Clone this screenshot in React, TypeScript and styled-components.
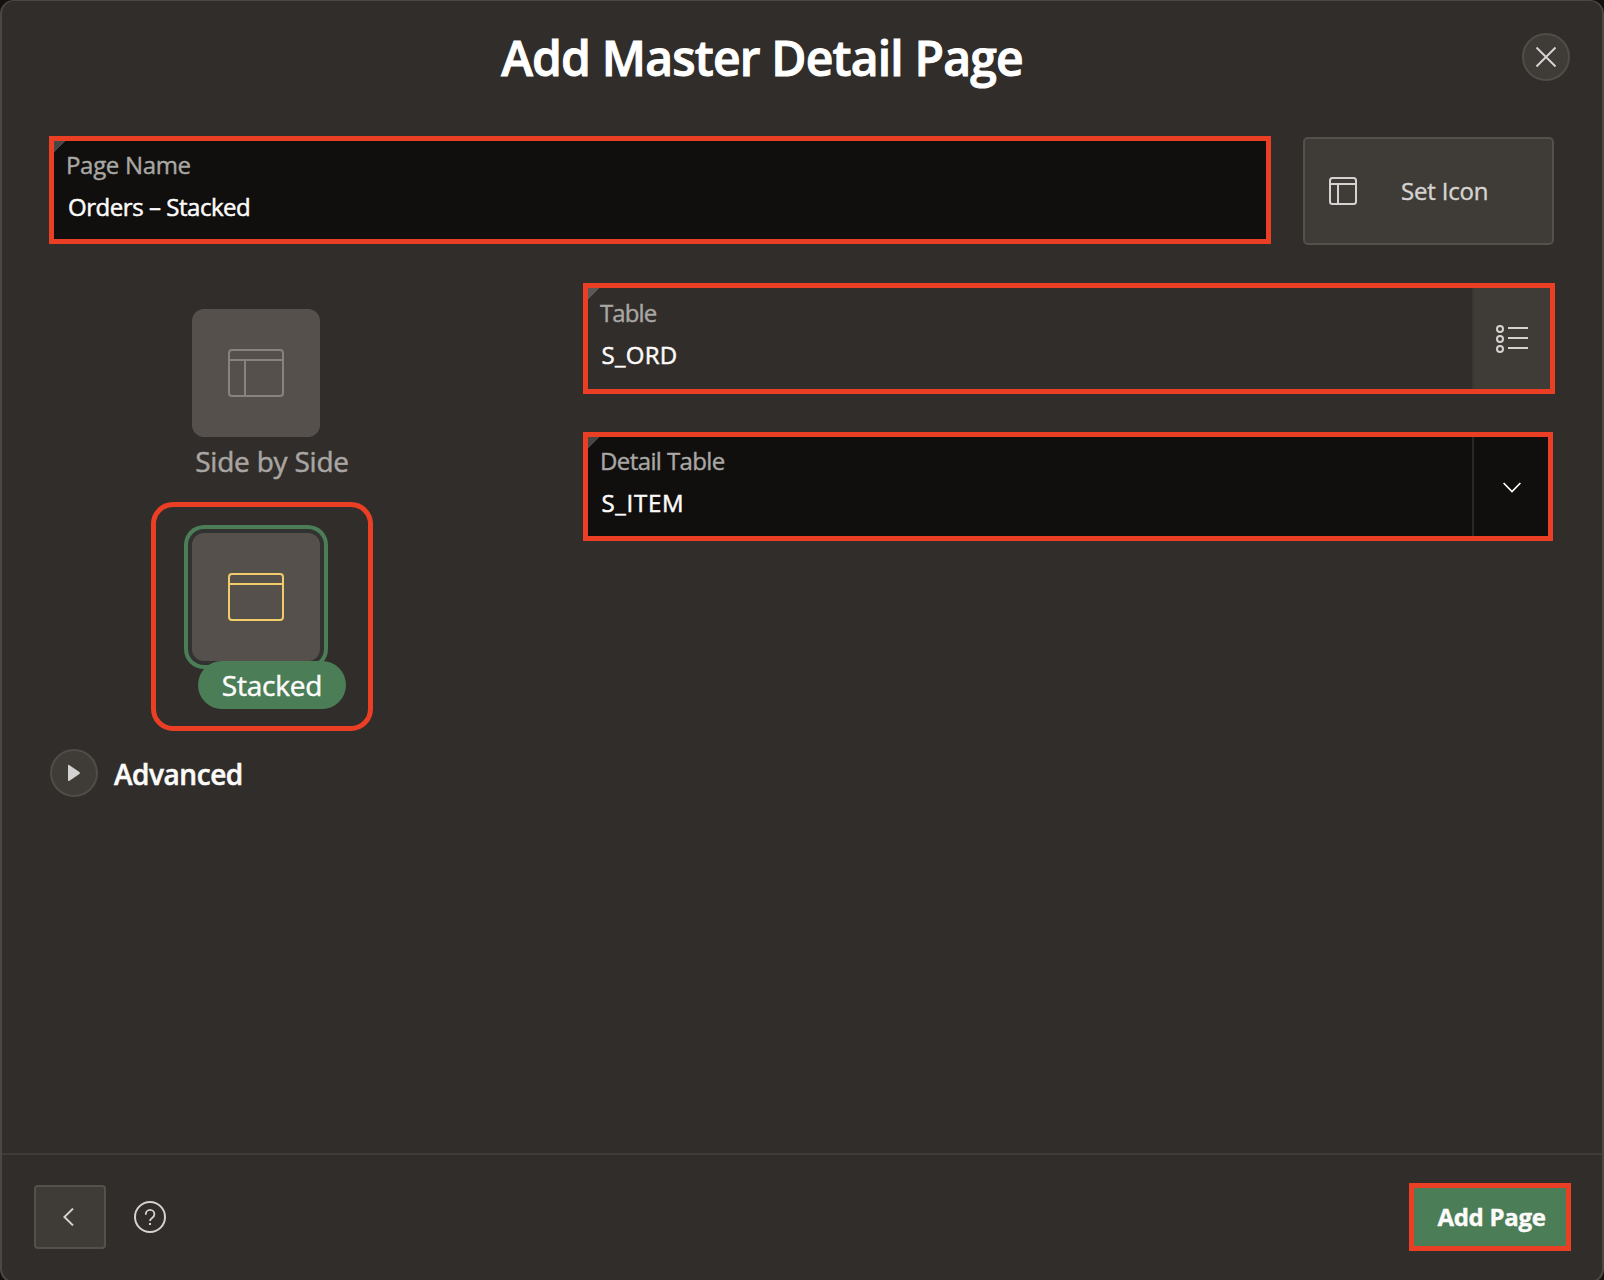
import React from 'react';
import styled, { createGlobalStyle } from 'styled-components';

const color = {
  surface: '#312d2a',
  raised: '#3f3b36',
  edge: '#55504b',
  field: '#100f0d',
  red: '#ea3f25',
  green: '#4b7d57',
  yellow: '#f1cc68',
  icon: '#d5d3d1',
  label: '#a9a7a4',
};

const GlobalStyle = createGlobalStyle`
  *, *::before, *::after { box-sizing: border-box; }
  body {
    margin: 0;
    background: #141210;
    font-family: 'Open Sans', 'Noto Sans', sans-serif;
    overflow: hidden;
  }
  button { font-family: inherit; padding: 0; margin: 0; }
  svg { display: block; flex: none; }
`;

const Viewport = styled.div`
  width: 1604px;
  height: 1280px;
  overflow: hidden;
`;

const Dialog = styled.section`
  display: flex;
  flex-direction: column;
  height: 1283px;
  background: ${color.surface};
  border: solid #4b4743;
  border-width: 1px 2px 2px;
  border-radius: 14px;
`;

const Header = styled.header`
  display: flex;
  align-items: center;
  height: 112px;
  padding-right: 32px;
`;

const Title = styled.h1`
  flex: 1;
  margin: 0;
  padding-top: 2px;
  text-align: center;
  font-size: 48px;
  line-height: 64px;
  font-weight: 600;
  letter-spacing: -0.82px;
  color: #fff;
  -webkit-text-stroke: 1px #fff;
`;

const RoundButton = styled.button`
  display: grid;
  place-items: center;
  width: 48px;
  height: 48px;
  border: 2px solid #504c47;
  border-radius: 50%;
  background: ${color.raised};
  color: ${color.icon};
`;

const Content = styled.main`
  flex: 1;
  padding: 23px 47px 0;
`;

const TopRow = styled.div`
  display: flex;
  align-items: flex-start;
  gap: 32px;
`;

const Columns = styled.div`
  display: grid;
  grid-template-columns: 534px 972px;
  margin-top: 38px;
`;

const Fields = styled.div`
  display: flex;
  flex-direction: column;
  gap: 38px;
`;

const FieldBox = styled.div<{ $w: number; $h: number; $dark?: boolean }>`
  display: flex;
  width: ${(p) => p.$w}px;
  height: ${(p) => p.$h}px;
  border: 5px solid ${color.red};
  background: ${(p) => (p.$dark ? color.field : color.surface)};
`;

const FieldText = styled.div<{ $top: number; $corner: string }>`
  flex: 1;
  padding: ${(p) => p.$top}px 0 0 12px;
  background: linear-gradient(135deg, ${(p) => p.$corner} 8.3px, transparent 8.4px);
`;

const FieldLabel = styled.div<{ $track: number }>`
  font-size: 24px;
  line-height: 42px;
  letter-spacing: ${(p) => p.$track}px;
  color: ${color.label};
  -webkit-text-stroke: 0.4px ${color.label};
`;

const FieldValue = styled.div<{ $track: number; $indent: number }>`
  padding-left: ${(p) => p.$indent}px;
  font-size: 24px;
  line-height: 42px;
  letter-spacing: ${(p) => p.$track}px;
  color: #fcfbfa;
  -webkit-text-stroke: 0.5px #fcfbfa;
`;

const FieldAction = styled.div<{ $w: number; $fill: string; $line: string }>`
  display: grid;
  place-items: center;
  width: ${(p) => p.$w}px;
  border-left: 2px solid ${(p) => p.$line};
  background: ${(p) => p.$fill};
`;

const IconButton = styled.button`
  display: flex;
  align-items: center;
  gap: 44px;
  width: 251px;
  height: 108px;
  margin-top: 1px;
  padding-left: 24px;
  border: 2px solid ${color.edge};
  border-radius: 5px;
  background: ${color.raised};
  color: ${color.icon};
  font-size: 24px;
  line-height: 36px;
  letter-spacing: -0.2px;
  -webkit-text-stroke: 0.4px ${color.icon};
`;

const Layouts = styled.div`
  width: 222px;
  margin-left: 102px;
`;

const Option = styled.div<{ $framed?: boolean }>`
  display: flex;
  flex-direction: column;
  align-items: center;
  margin-top: ${(p) => (p.$framed ? 17 : 26)}px;
  padding: ${(p) => (p.$framed ? '26px 0 17px' : '0')};
  border: ${(p) => (p.$framed ? `5px solid ${color.red}` : '0')};
  border-radius: 22px;
`;

const Tile = styled.div<{ $selected?: boolean }>`
  display: grid;
  place-items: center;
  width: 128px;
  height: 128px;
  margin-right: 12px;
  border-radius: 12px;
  background: #55504b;
  color: ${(p) => (p.$selected ? color.yellow : '#86827e')};
  box-shadow: ${(p) => (p.$selected ? `0 0 0 4px #333232, 0 0 0 8px ${color.green}` : 'none')};
`;

const OptionLabel = styled.div<{ $selected?: boolean }>`
  z-index: 1;
  height: 48px;
  margin-left: 20px;
  padding: 0 24px;
  border-radius: 24px;
  background: ${(p) => (p.$selected ? color.green : 'transparent')};
  color: ${(p) => (p.$selected ? '#fcfbfa' : '#a8a5a2')};
  font-size: 28px;
  line-height: 48px;
  letter-spacing: -0.22px;
  white-space: nowrap;
  -webkit-text-stroke: 0.5px currentColor;
`;

const Advanced = styled.div`
  display: flex;
  align-items: center;
  gap: 16px;
  margin: 18px 0 0 1px;
  color: #fcfbfa;
  font-size: 28px;
  line-height: 48px;
  font-weight: 600;
  letter-spacing: -0.45px;
  -webkit-text-stroke: 0.5px #fcfbfa;
`;

const AdvancedText = styled.span`
  padding-top: 2px;
  line-height: 46px;
`;

const Footer = styled.footer`
  display: flex;
  align-items: center;
  height: 128px;
  padding: 0 31px 2px 32px;
  border-top: 2px solid #3f3b38;
`;

const BackButton = styled.button`
  display: grid;
  place-items: center;
  width: 72px;
  height: 64px;
  padding-right: 3px;
  margin-right: 28px;
  border: 2px solid ${color.edge};
  border-radius: 4px;
  background: ${color.raised};
  color: ${color.icon};
`;

const AddButton = styled.button`
  width: 162px;
  height: 68px;
  margin-left: auto;
  padding-left: 3px;
  border: 5px solid ${color.red};
  background: ${color.green};
  color: #fcfbfa;
  font-size: 24px;
  line-height: 36px;
  font-weight: 700;
  letter-spacing: -0.3px;
  -webkit-text-stroke: 0.4px #fcfbfa;
`;

const CloseIcon = () => (
  <svg width="20" height="20" viewBox="0 0 20 20" fill="none" stroke="currentColor" strokeWidth="2">
    <path d="M0.5 0.5 19.5 19.5M19.5 0.5 0.5 19.5" />
  </svg>
);

const PageIcon = () => (
  <svg width="28" height="28" viewBox="0 0 28 28" fill="none" stroke="currentColor" strokeWidth="2">
    <rect x="1" y="1" width="26" height="26" rx="2.5" />
    <path d="M1 7h26M9 7v20" />
  </svg>
);

const WindowIcon = ({ split = false }: { split?: boolean }) => (
  <svg width="56" height="48" viewBox="0 0 56 48" fill="none" stroke="currentColor" strokeWidth="2">
    <rect x="1" y="1" width="54" height="46" rx="3" />
    <path d={split ? 'M1 11h54M17 11v36' : 'M1 11h54'} />
  </svg>
);

const ListIcon = () => (
  <svg width="32" height="28" viewBox="0 0 32 28" fill="none" stroke={color.icon} strokeWidth="2">
    {[4, 14, 24].map((y) => (
      <g key={y}>
        <circle cx="4" cy={y} r="3" />
        <path d={`M12 ${y - 1}h20`} />
      </g>
    ))}
  </svg>
);

const ChevronDown = () => (
  <svg width="18" height="11" viewBox="0 0 18 11" fill="none" stroke="#fff" strokeWidth="1.6">
    <path d="M0.6 1 9 9.6 17.4 1" />
  </svg>
);

const ChevronLeft = () => (
  <svg width="11" height="18" viewBox="0 0 11 18" fill="none" stroke="currentColor" strokeWidth="2">
    <path d="M10 0.6 1.4 9 10 17.4" />
  </svg>
);

const PlayIcon = () => (
  <svg width="16" height="18" viewBox="0 0 16 18" fill="currentColor">
    <path d="M2 1.6Q2 .4 3.1 1L13.4 8Q14.6 9 13.4 9.9L3.1 16.9Q2 17.5 2 16.3Z" />
  </svg>
);

const HelpIcon = () => (
  <svg width="32" height="32" viewBox="0 0 32 32" fill="none" stroke={color.icon} strokeWidth="2">
    <circle cx="16" cy="16" r="15" />
    <path d="M11.8 13.8v-.6a4.3 4.3 0 0 1 8.6 0c0 2-1.1 2.9-2.3 3.7-1.3.9-2.1 1.500-2.1 3.1" strokeWidth="1.8" />
    <path d="M16 22v2" />
  </svg>
);

export default function App() {
  return (
    <Viewport>
      <GlobalStyle />
      <Dialog>
        <Header>
          <Title>Add Master Detail Page</Title>
          <RoundButton aria-label="Close"><CloseIcon /></RoundButton>
        </Header>
        <Content>
          <TopRow>
            <FieldBox $w={1222} $h={108} $dark>
              <FieldText $top={3} $corner="#474645">
                <FieldLabel $track={-0.32}>Page Name</FieldLabel>
                <FieldValue $track={-0.46} $indent={2}>Orders – Stacked</FieldValue>
              </FieldText>
            </FieldBox>
            <IconButton><PageIcon />Set Icon</IconButton>
          </TopRow>
          <Columns>
            <div>
              <Layouts>
                <Option>
                  <Tile><WindowIcon split /></Tile>
                  <OptionLabel>Side by Side</OptionLabel>
                </Option>
                <Option $framed>
                  <Tile $selected><WindowIcon /></Tile>
                  <OptionLabel $selected>Stacked</OptionLabel>
                </Option>
              </Layouts>
              <Advanced>
                <RoundButton aria-label="Expand"><PlayIcon /></RoundButton>
                <AdvancedText>Advanced</AdvancedText>
              </Advanced>
            </div>
            <Fields>
              <FieldBox $w={972} $h={111}>
                <FieldText $top={4} $corner="#5b5957">
                  <FieldLabel $track={-0.9}>Table</FieldLabel>
                  <FieldValue $track={0.3} $indent={1.5}>S_ORD</FieldValue>
                </FieldText>
                <FieldAction $w={78} $fill={color.raised} $line="#393531"><ListIcon /></FieldAction>
              </FieldBox>
              <FieldBox $w={970} $h={109} $dark>
                <FieldText $top={3} $corner="#474645">
                  <FieldLabel $track={-0.6}>Detail Table</FieldLabel>
                  <FieldValue $track={0.7} $indent={1.5}>S_ITEM</FieldValue>
                </FieldText>
                <FieldAction $w={76} $fill={color.field} $line="#2a2826">
                  <ChevronBox><ChevronDown /></ChevronBox>
                </FieldAction>
              </FieldBox>
            </Fields>
          </Columns>
        </Content>
        <Footer>
          <BackButton aria-label="Back"><ChevronLeft /></BackButton>
          <HelpIcon />
          <AddButton>Add Page</AddButton>
        </Footer>
      </Dialog>
    </Viewport>
  );
}

const ChevronBox = styled.span`
  padding: 1px 0 0 2px;
`;
